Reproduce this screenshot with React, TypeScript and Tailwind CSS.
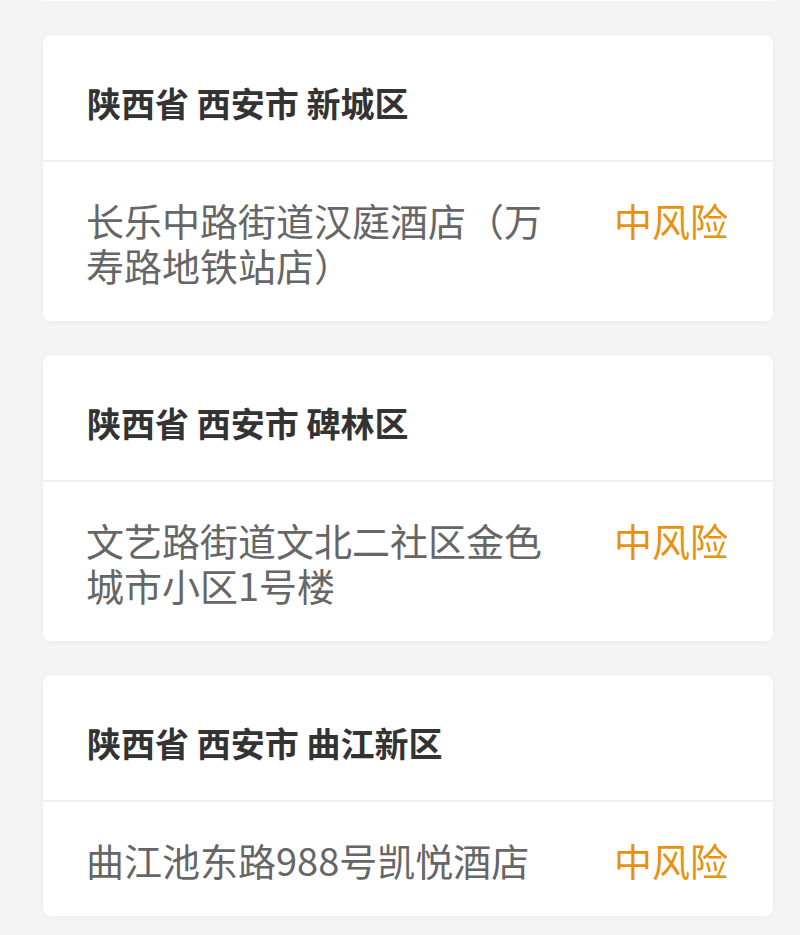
import React from "react";

interface Item {
  region: string;
  place: string;
  level: string;
}

const items: Item[] = [
  { region: "陕西省 西安市 新城区", place: "长乐中路街道汉庭酒店（万寿路地铁站店）", level: "中风险" },
  { region: "陕西省 西安市 碑林区", place: "文艺路街道文北二社区金色城市小区1号楼", level: "中风险" },
  { region: "陕西省 西安市 曲江新区", place: "曲江池东路988号凯悦酒店", level: "中风险" },
];

const RiskCard = ({ region, place, level }: Item) => {
  return (
    <div className="bg-white rounded-lg shadow-[0_1px_6px_rgba(0,0,0,0.04)]">
      {/* Region header */}
      <div className="h-[127px] pt-[51px] pl-[44px] pr-[45px] border-b-2 border-[#f0f0f0]">
        <h2 className="text-[34px] leading-[34px] font-bold text-[#333333]">{region}</h2>
      </div>

      {/* Place row */}
      <div className="flex items-start pl-[43px] pr-[45px] pt-[35px] pb-[34px]">
        <p className="flex-1 text-[38px] leading-[45px] text-[#666666]">{place}</p>
        <span className="ml-12 shrink-0 text-[38px] leading-[45px] text-[#e8920c]">{level}</span>
      </div>
    </div>
  );
};

export default function App() {
  return (
    <div
      className="min-h-[935px] bg-[#f4f4f4] pl-[43px] pr-[27px] overflow-hidden"
      style={{ fontFamily: '"Noto Sans CJK SC", "Noto Sans", sans-serif' }}
    >
      {/* tail of the previous card */}
      <div className="h-[1px] bg-white rounded-b-lg shadow-[0_1px_6px_rgba(0,0,0,0.04)]" />
      <div className="flex flex-col gap-[34px] pt-[34px] pb-8">
        {items.map((it) => (
          <RiskCard key={it.region} {...it} />
        ))}
      </div>
    </div>
  );
}
